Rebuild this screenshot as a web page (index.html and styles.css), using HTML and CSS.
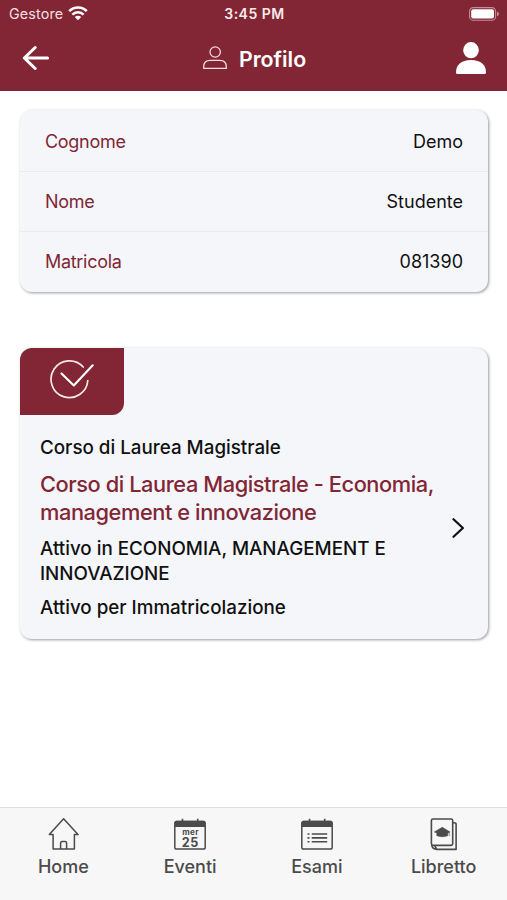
FILE: index.html
```html
<!DOCTYPE html>
<html lang="it">
<head>
<meta charset="utf-8">
<meta name="viewport" content="width=device-width, initial-scale=1">
<title>Profilo</title>
<link rel="stylesheet" href="styles.css">
</head>
<body>
<div class="app">
  <header class="header">
    <div class="status">
      <div class="carrier"><span>Gestore</span>
        <svg width="20" height="15" viewBox="0 0 20 15" fill="none" stroke="#fff" stroke-width="2.5"><path d="M1.2 5.2C6 .2 14 .2 18.8 5.2M4.4 8.6c3.1-3.2 8.1-3.2 11.2 0"/><path d="M6.8 11c1.8-1.7 4.6-1.7 6.4 0L10 14.3z" fill="#fff" stroke="none"/></svg>
      </div>
      <span class="clock">3:45 PM</span>
      <svg class="battery" width="31" height="14" viewBox="0 0 31 14"><rect x=".6" y=".6" width="26" height="12.6" rx="3.8" fill="none" stroke="#c48f98" stroke-width="1.1"/><rect x="2.2" y="2.2" width="22.8" height="9.4" rx="2" fill="#fff"/><path d="M28 4.6q2 .8 2 2.3t-2 2.3z" fill="#c48f98"/></svg>
    </div>
    <div class="navbar">
      <svg class="back" width="28" height="26" viewBox="0 0 28 26" fill="none" stroke="#fff" stroke-width="3" stroke-linecap="round" stroke-linejoin="round"><path d="M13.2 2.5 2.3 13l10.9 10.5M2.8 13h22.8"/></svg>
      <div class="heading">
        <svg width="24" height="24" viewBox="0 0 24 24" fill="none" stroke="#f6dfe1" stroke-width="1.25"><circle cx="12.2" cy="6" r="5.2"/><path d="M.7 22.4v-1.6q0-6.4 6.6-6.4h9.4q6.6 0 6.6 6.4v1.6z" stroke-linejoin="round"/></svg>
        <h1>Profilo</h1>
      </div>
      <svg class="account" width="30" height="32" viewBox="0 0 30 32" fill="#fff"><ellipse cx="15" cy="8.2" rx="7.8" ry="8.1"/><path d="M0 30.4C0 23 5 18 15 18s15 5 15 12.4q0 1.6-1.6 1.6H1.6Q0 32 0 30.4z"/></svg>
    </div>
  </header>

  <main class="content">
    <dl class="card details">
      <div class="row"><dt>Cognome</dt><dd>Demo</dd></div>
      <div class="row"><dt>Nome</dt><dd>Studente</dd></div>
      <div class="row"><dt>Matricola</dt><dd>081390</dd></div>
    </dl>

    <section class="card course">
      <div class="badge">
        <svg width="44" height="40" viewBox="0 0 44 40" fill="none" stroke="#fbe9e8" stroke-width="1.7" stroke-linecap="round" stroke-linejoin="round"><path d="M33.2 8A18.4 18.4 0 1 0 37.8 21.5"/><path d="m11.5 14.5 12.3 12L42.7 6.3" stroke="#fff" stroke-width="2.1"/></svg>
      </div>
      <div class="course-body">
        <div class="course-text">
          <p class="kind">Corso di Laurea Magistrale</p>
          <h2>Corso di Laurea Magistrale - Economia, management e innovazione</h2>
          <p class="active">Attivo in ECONOMIA, MANAGEMENT E INNOVAZIONE</p>
          <p class="reason">Attivo per Immatricolazione</p>
        </div>
        <svg class="chevron" width="13" height="20" viewBox="0 0 13 20" fill="none" stroke="#111" stroke-width="2.2" stroke-linecap="round" stroke-linejoin="round"><path d="m1.5 1.2 9.4 8.8-9.4 8.8"/></svg>
      </div>
    </section>
  </main>

  <nav class="tabs">
    <a class="tab">
      <svg width="32" height="34" viewBox="0 0 32 34" fill="none" stroke="#4b4b4b" stroke-width="1.5" stroke-linejoin="round"><path d="M16.6 .8 31 16.6H27.4V31H6.1V16.6H2.3z"/><path d="M13.6 31v-6q0-1.5 1.5-1.5h3q1.5 0 1.5 1.5v6"/></svg>
      <span>Home</span>
    </a>
    <a class="tab">
      <svg width="32" height="34" viewBox="0 0 32 34"><rect x=".8" y="3.4" width="30.4" height="27.6" rx="1.8" fill="none" stroke="#4b4b4b" stroke-width="1.5"/><path d="M.8 9V4.2q0-1.5 1.5-1.5h27.4q1.5 0 1.5 1.5V9zM7.7.8h1.6v3H7.7zM22.9.8h1.6v3h-1.6z" fill="#4b4b4b"/><text class="day" x="16.6" y="16.6" text-anchor="middle">mer</text><text class="date" x="16.4" y="29.4" text-anchor="middle">25</text></svg>
      <span>Eventi</span>
    </a>
    <a class="tab">
      <svg width="32" height="34" viewBox="0 0 32 34"><rect x=".8" y="3.4" width="30.4" height="27.6" rx="1.8" fill="none" stroke="#4b4b4b" stroke-width="1.5"/><path d="M.8 9V4.2q0-1.5 1.5-1.5h27.4q1.5 0 1.5 1.5V9zM7.7.8h1.6v3H7.7zM22.9.8h1.6v3h-1.6z" fill="#4b4b4b"/><path d="M6.5 16h2m2.2 0h15.5M6.5 19.9h2m2.2 0h15.5M6.5 23.7h2m2.2 0h15.5" stroke="#4b4b4b" stroke-width="1.6"/></svg>
      <span>Esami</span>
    </a>
    <a class="tab">
      <svg width="28" height="34" viewBox="0 0 28 34" fill="none" stroke="#4b4b4b" stroke-width="1.6" stroke-linejoin="round"><rect x="1.4" y="1" width="21.3" height="26.4" rx="1.6"/><path d="M22.7 4.8h1.6q1.8 0 1.8 1.6v25H7Q2 31.1 1.8 27.1M6.5 31.4l-1.7-4"/><path d="m4.3 13.9 8-4.6 7.7 4.6-2.2 1.1v2.7q-5.5 2.2-11 0V15zM19.3 14.1v4" fill="#4b4b4b" stroke-width=".6"/></svg>
      <span>Libretto</span>
    </a>
  </nav>
</div>
</body>
</html>
```
FILE: styles.css
```css
* { box-sizing: border-box; }
body, h1, h2, p, dl, dd { margin: 0; }
body {
  font-family: Inter, "Liberation Sans", sans-serif;
  color: #111;
  background: #fff;
}
svg { display: block; flex: none; }
.app { display: flex; flex-direction: column; height: 900px; }

.header { height: 91px; flex: none; background: #822635; color: #fff; }
.status {
  display: grid;
  grid-template-columns: 1fr auto 1fr;
  align-items: center;
  height: 27px;
  padding: 0 7px 0 9px;
}
.carrier { display: flex; align-items: center; gap: 5px; font-size: 14.3px; letter-spacing: .15px; color: #f6dfe1; }
.carrier svg { margin-top: -1px; }
.clock { font-size: 14px; font-weight: 600; letter-spacing: .5px; color: #fbe9e8; }
.battery { justify-self: end; }
.navbar {
  display: grid;
  grid-template-columns: 1fr auto 1fr;
  align-items: center;
  height: 62px;
  padding: 0 21px 0 22px;
}
.heading { display: flex; align-items: center; gap: 12px; margin-left: 1px; }
.heading svg { margin-top: -1px; }
.heading h1 { padding-top: 2px; font-size: 21.3px; line-height: 27px; font-weight: 600; }
.account { justify-self: end; }

.content { flex: 1; padding: 19px 19px 0 20px; }
.card {
  background: #f4f6fa;
  border-radius: 12px;
  box-shadow: 1px 1px 3px rgba(0, 0, 0, .4);
  overflow: hidden;
}
.row {
  display: flex;
  justify-content: space-between;
  align-items: center;
  height: 60.5px;
  padding: 3px 25px 0;
  font-size: 18px;
}
.row + .row { padding-top: 0; border-top: 1px solid #e9ebef; }
.row dt { color: #822635; letter-spacing: -.3px; }

.course { height: 291px; margin-top: 56px; }
.badge {
  display: flex;
  width: 104px;
  height: 67px;
  padding: 11px 0 0 30px;
  background: #822635;
  border-radius: 0 0 12px 0;
}
.course-body { display: flex; align-items: center; padding: 21px 23px 0 20px; }
.course-text { flex: 1; font-size: 18.8px; line-height: 24.5px; font-weight: 500; }
.course h2 {
  margin: 10px 0 11px;
  font-size: 21.8px;
  line-height: 28px;
  font-weight: 500;
  letter-spacing: -.43px;
  color: #822635;
}
.active { width: 370px; }
.reason { margin-top: 10px; }

.tabs {
  display: grid;
  grid-template-columns: repeat(4, 1fr);
  height: 93px;
  border-top: 1px solid #dedede;
  background: #f7f7f7;
}
.tab {
  display: flex;
  flex-direction: column;
  align-items: center;
  padding-top: 10px;
  gap: 3px;
  color: #4b4b4b;
  font-size: 18px;
  line-height: 24px;
  font-weight: 500;
}
.day { font-size: 8.2px; font-weight: 700; letter-spacing: .4px; fill: #4b4b4b; }
.date { font-size: 12.6px; font-weight: 700; letter-spacing: .6px; fill: #4b4b4b; }
```
